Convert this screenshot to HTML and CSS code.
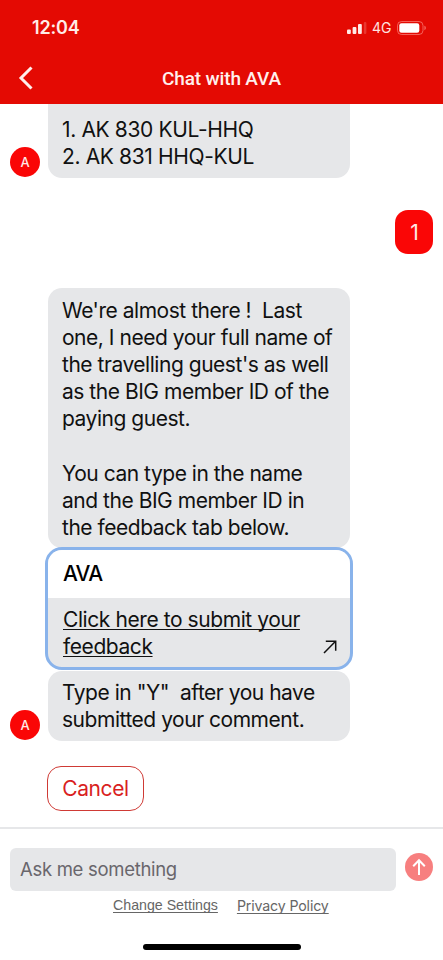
FILE: index.html
```html
<!DOCTYPE html>
<html lang="en">
<head>
<meta charset="utf-8">
<meta name="viewport" content="width=device-width, initial-scale=1">
<title>Chat with AVA</title>
<link rel="stylesheet" href="styles.css">
</head>
<body>
<div class="app">
  <header class="header">
    <div class="status">
      <span class="clock">12:04</span>
      <div class="indicators">
        <svg class="signal" width="20" height="12" viewBox="0 0 20 12" fill="#ffece8"><rect x="0" y="7.5" width="3.8" height="4.5" rx="1"/><rect x="5.6" y="5" width="3.8" height="7" rx="1"/><rect x="11" y="2" width="3.8" height="10" rx="1"/><rect x="16.8" y="0" width="2.6" height="12" rx="1" opacity=".2"/></svg>
        <span class="network">4G</span>
        <svg class="battery" width="30" height="14" viewBox="0 0 30 14"><rect x=".5" y=".5" width="25.5" height="13" rx="4" fill="none" stroke="#ff9a92" stroke-opacity=".6"/><rect x="2.3" y="2.3" width="20" height="9.4" rx="2.2" fill="#fff"/><path d="M27.5 4.8c1.6.6 1.6 3.8 0 4.4z" fill="#ff9a92" opacity=".8"/></svg>
      </div>
    </div>
    <nav class="nav">
      <svg class="back" width="15" height="24" viewBox="0 0 15 24" fill="none" stroke="#ffefec" stroke-width="3"><path d="M13.5 1.5 3 12 13.5 22.5"/></svg>
      <h1 class="title">Chat with AVA</h1>
    </nav>
  </header>

  <main class="chat">
    <section class="row">
      <div class="avatar">A</div>
      <div class="bubble bubble-first">
        <p class="flights">1. AK 830 KUL-HHQ<br>2. AK 831 HHQ-KUL</p>
      </div>
    </section>

    <div class="reply">1</div>

    <section class="row">
      <div class="avatar">A</div>
      <div class="stack">
        <div class="bubble bubble-long">
          <p>We're almost there !&nbsp; Last<br>one, I need your full name of<br>the travelling guest's as well<br>as the BIG member ID of the<br>paying guest.</p>
          <p class="para">You can type in the name<br>and the BIG member ID in<br>the feedback tab below.</p>
        </div>
        <div class="card">
          <div class="card-title">AVA</div>
          <div class="card-body">
            <a class="card-link">Click here to submit your<br>feedback</a>
            <svg class="open" width="14" height="14" viewBox="0 0 14 14" fill="none" stroke="#111" stroke-width="1.5"><path d="M1 13 12.6 1.2M2.8 1.2h9.9v9.6"/></svg>
          </div>
        </div>
        <div class="bubble bubble-last"><p>Type in "Y"&nbsp; after you have<br>submitted your comment.</p></div>
      </div>
    </section>
    <button class="cancel">Cancel</button>
  </main>

  <footer class="footer">
    <div class="composer">
      <div class="input">Ask me something</div>
      <svg class="send" width="28" height="28" viewBox="0 0 28 28"><circle cx="14" cy="14" r="14" fill="#f77f7f"/><path d="M14 22V7.5M8.2 13.2 14 7.3l5.8 5.9" fill="none" stroke="#fff" stroke-width="2"/></svg>
    </div>
    <div class="links"><a class="settings">Change Settings</a><a class="privacy">Privacy Policy</a></div>
    <div class="home"></div>
  </footer>
</div>
</body>
</html>
```
FILE: styles.css
```css
* { box-sizing: border-box; }
body { margin: 0; background: #fff; }
p, h1 { margin: 0; }

.app {
  width: 443px;
  height: 960px;
  overflow: hidden;
  display: flex;
  flex-direction: column;
  font-family: Inter, "Liberation Sans", sans-serif;
  color: #111;
}

.header { height: 104px; flex: none; background: #e40a03; color: #fff; }
.status { height: 55px; padding: 0 16px 0 32px; display: flex; align-items: center; justify-content: space-between; }
.clock { font-size: 18px; font-weight: 600; letter-spacing: -.2px; color: #ffece8; }
.indicators { display: flex; align-items: center; }
.network { margin-left: 5px; font-size: 14px; color: #ffe4e0; width: 20px; }
.battery { margin-left: 5px; }
.nav { height: 46px; padding-left: 18px; display: flex; align-items: center; }
.title { width: 407px; padding: 2px 30px 0 0; text-align: center; font: 500 19px/24px Roboto, sans-serif; letter-spacing: -.15px; color: #fff0ed; }
.back { flex: none; }

.chat { height: 723px; flex: none; display: flex; flex-direction: column; }
.row { display: flex; align-items: flex-end; padding-left: 10px; }
.avatar { width: 30px; height: 30px; margin: 0 8px 1px 0; flex: none; border-radius: 50%; background: #fa0606; color: #ffe9e6; font-size: 13px; font-weight: 500; line-height: 30px; text-align: center; }
.bubble { width: 302px; padding-left: 14px; border-radius: 14px; background: #e6e7e9; font-size: 21px; line-height: 27.2px; letter-spacing: -.47px; white-space: nowrap; }
.bubble-first { height: 74px; padding-top: 12px; border-radius: 0 0 14px 14px; letter-spacing: -.36px; }
.bubble-long { height: 260px; padding-top: 8.5px; }
.para { margin-top: 27.2px; }
.bubble-last { height: 70px; margin-top: 1px; padding-top: 8px; }
.reply { width: 38px; height: 44px; margin: 32px 10px 34px auto; border-radius: 13px; background: #fa0606; color: #ffe9e6; font-size: 21px; line-height: 46px; padding-left: 1px; text-align: center; }

.card { width: 308px; height: 123px; margin: -1px 0 0 -3px; border: 3px solid #89b3eb; border-radius: 17px; overflow: hidden; background: #e6e7e9; font-size: 21px; line-height: 27.2px; letter-spacing: -.42px; }
.card-title { height: 48px; padding: 10px 15px 0; background: #fff; font-weight: 500; letter-spacing: -.8px; color: #000; }
.card-body { padding: 8px 13px 0 15px; display: flex; justify-content: space-between; align-items: flex-end; }
.card-link { text-decoration: underline; text-decoration-thickness: 1.3px; text-underline-offset: 2px; text-decoration-skip-ink: none; white-space: nowrap; }
.open { margin-bottom: 6px; flex: none; }

.cancel { width: 97px; height: 45px; margin: 25px 0 0 47px; padding: 0; border: 1px solid #cf3a35; border-radius: 14px; background: #fff; color: #d91f1f; font: 21px Inter, sans-serif; letter-spacing: -.4px; }

.footer { flex: 1; border-top: 2px solid #e6e7e9; padding-top: 19px; display: flex; flex-direction: column; }
.composer { display: flex; align-items: center; padding: 0 10px; gap: 9px; }
.input { width: 386px; height: 43px; padding-left: 10px; border-radius: 6px; background: #e6e7e9; color: #69666c; font-size: 18.5px; line-height: 43px; letter-spacing: -.3px; }
.send { flex: none; margin-top: -5px; }
.links { display: flex; padding-left: 113px; margin-top: 5px; font-size: 14.2px; line-height: 19px; color: #666; white-space: nowrap; }
.links a { text-decoration: underline; text-underline-offset: 2px; text-decoration-skip-ink: none; }
.settings { width: 124px; font-family: "Liberation Sans", sans-serif; }
.links .settings { width: auto; margin-right: 19px; }
.privacy { letter-spacing: -.15px; }
.home { width: 158px; height: 6px; margin: 29px 0 0 143px; border-radius: 3px; background: #000; }
```
